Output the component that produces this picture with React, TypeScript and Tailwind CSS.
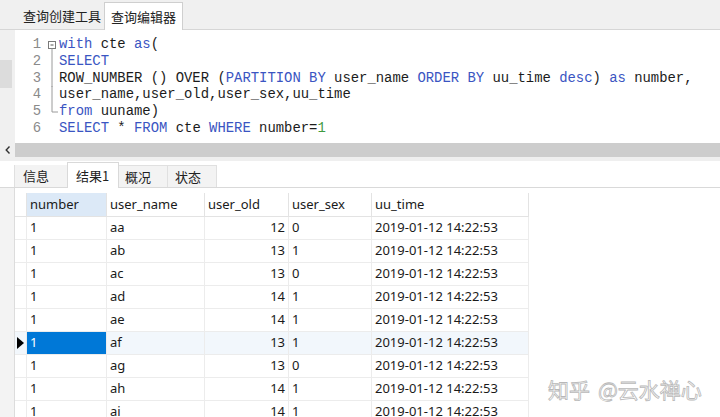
import React from 'react';

type Seg = [string, 'k' | 'p' | 'n'];

const codeLines: Seg[][] = [
  [['with', 'k'], [' cte ', 'p'], ['as', 'k'], ['(', 'p']],
  [['SELECT', 'k']],
  [
    ['ROW_NUMBER () OVER (', 'p'],
    ['PARTITION BY', 'k'],
    [' user_name ', 'p'],
    ['ORDER BY', 'k'],
    [' uu_time ', 'p'],
    ['desc', 'k'],
    [') ', 'p'],
    ['as', 'k'],
    [' number,', 'p'],
  ],
  [['user_name,user_old,user_sex,uu_time', 'p']],
  [['from', 'k'], [' uuname)', 'p']],
  [['SELECT', 'k'], [' * ', 'p'], ['FROM', 'k'], [' cte ', 'p'], ['WHERE', 'k'], [' number=', 'p'], ['1', 'n']],
];

const segColor = {
  k: 'text-[#3a55c2]',
  p: 'text-[#1c1c1c]',
  n: 'text-[#3f9b3f]',
};

const rows = [
  ['aa', '12', '0'],
  ['ab', '13', '1'],
  ['ac', '13', '0'],
  ['ad', '14', '1'],
  ['ae', '14', '1'],
  ['af', '13', '1'],
  ['ag', '13', '0'],
  ['ah', '14', '1'],
  ['ai', '14', '1'],
];

function FoldMark({ line }: { line: number }) {
  // fold guide drawn in the gutter next to the code
  return (
    <svg width="12" height="17" className="shrink-0">
      {line === 0 && (
        <>
          <rect x="1.5" y="5.5" width="7" height="7" fill="white" stroke="#7a7a7a" />
          <line x1="3.5" y1="9" x2="6.5" y2="9" stroke="#555" />
          <line x1="5" y1="12.5" x2="5" y2="17" stroke="#9a9a9a" />
        </>
      )}
      {line > 0 && line < 4 && <line x1="5" y1="0" x2="5" y2="17" stroke="#9a9a9a" />}
      {line === 4 && (
        <>
          <line x1="5" y1="0" x2="5" y2="9" stroke="#9a9a9a" />
          <line x1="5" y1="9" x2="11" y2="9" stroke="#9a9a9a" />
        </>
      )}
    </svg>
  );
}

export default function App() {
  return (
    <div className="w-[720px] h-[417px] overflow-hidden bg-white flex flex-col relative font-['Noto_Sans','Noto_Sans_CJK_SC',sans-serif] text-[13px] text-[#1a1a1a]">
      {/* top tabs */}
      <div className="h-[30px] shrink-0 flex items-end bg-[#f0f0f0] pl-[15px] border-b border-[#d6d6d6] font-['Noto_Sans_CJK_SC',sans-serif] text-[13px] text-[#222] whitespace-nowrap">
        <div className="h-[27px] pl-[8px] pr-[3px] flex items-center">查询创建工具</div>
        <div className="h-[28px] -mb-px px-[6px] flex items-center bg-white border border-b-0 border-[#cfcfcf]">
          查询编辑器
        </div>
      </div>

      {/* editor */}
      <div className="h-[113px] shrink-0 flex">
        <div className="w-[15px] shrink-0 bg-[#f0f0f0] pt-[30px]">
          <div className="h-[28px] w-[12px] bg-[#dcdcdc]" />
        </div>
        <div className="flex-1 bg-white pt-[6px] font-['Liberation_Mono',monospace] text-[13.9px] leading-[16.8px]">
          {codeLines.map((segs, i) => (
            <div key={i} className="flex items-center h-[16.8px]">
              <span className="w-[26px] text-right text-[#8a8a8a] shrink-0">{i + 1}</span>
              <span className="w-[6px] shrink-0" />
              <FoldMark line={i} />
              <span className="whitespace-pre">
                {segs.map(([t, c], j) => (
                  <span key={j} className={segColor[c]}>
                    {t}
                  </span>
                ))}
              </span>
            </div>
          ))}
        </div>
      </div>

      {/* horizontal scrollbar */}
      <div className="h-[14px] shrink-0 flex">
        <div className="w-[15px] bg-[#f0f0f0] flex items-center justify-center">
          <svg width="6" height="8" viewBox="0 0 6 8">
            <path d="M4.5 0.5 L1.2 4 L4.5 7.5" fill="none" stroke="#333" strokeWidth="1.4" />
          </svg>
        </div>
        <div className="flex-1 bg-[#cdcdcd]" />
      </div>
      <div className="h-[4px] shrink-0 bg-[#efefef]" />

      {/* result tabs */}
      <div className="h-[27px] shrink-0 flex items-end bg-white border-b border-[#d9d9d9] pl-[14px] font-['Noto_Sans_CJK_SC',sans-serif] text-[13px] text-[#222] whitespace-nowrap">
        <div className="h-[22px] w-[53px] pl-[8px] flex items-center bg-[#f3f3f3] border-l border-[#e0e0e0]">信息</div>
        <div className="h-[26px] -mb-px w-[52px] pl-[8px] flex items-center bg-white border border-b-0 border-[#d9d9d9]">结果1</div>
        <div className="h-[22px] w-[49px] pl-[6px] flex items-center bg-[#f3f3f3] border-r border-t border-[#e0e0e0]">概况</div>
        <div className="h-[22px] w-[49px] pl-[7px] flex items-center bg-[#f3f3f3] border-r border-t border-[#e0e0e0]">状态</div>
      </div>

      {/* result grid */}
      <div className="flex-1 flex">
        <div className="w-[15px] shrink-0 bg-[#f3f3f3] border-r border-[#dcdcdc]" />
        <div className="pt-[5px]">
          <div className="grid grid-cols-[12px_80px_98px_84px_83px_157px]">
            <div className="h-[24px] border-r border-b border-[#e3e3e3]" />
            <div className="h-[24px] px-[3px] flex items-center bg-[#dce9f7] border-r border-b border-[#e3e3e3]">number</div>
            <div className="h-[24px] px-[3px] flex items-center border-r border-b border-[#e3e3e3]">user_name</div>
            <div className="h-[24px] px-[3px] flex items-center border-r border-b border-[#e3e3e3]">user_old</div>
            <div className="h-[24px] px-[3px] flex items-center border-r border-b border-[#e3e3e3]">user_sex</div>
            <div className="h-[24px] px-[3px] flex items-center border-r border-b border-[#e3e3e3]">uu_time</div>
            {rows.map(([name, old, sex]) => {
              const sel = name === 'af';
              const bg = sel ? 'bg-[#f2f7fc]' : 'bg-white';
              return (
                <React.Fragment key={name}>
                  <div className={`h-[23px] flex items-center justify-center border-r border-b border-[#ececec] ${bg}`}>
                    {sel && (
                      <svg width="7" height="12" viewBox="0 0 7 12">
                        <path d="M0 0 L7 6 L0 12 Z" fill="#000" />
                      </svg>
                    )}
                  </div>
                  <div
                    className={`h-[23px] px-[3px] flex items-center border-r border-b border-[#ececec] ${
                      sel ? 'bg-[#0078d7] text-white' : 'bg-white'
                    }`}
                  >
                    1
                  </div>
                  <div className={`h-[23px] px-[3px] flex items-center border-r border-b border-[#ececec] ${bg}`}>{name}</div>
                  <div className={`h-[23px] px-[3px] flex items-center justify-end border-r border-b border-[#ececec] ${bg}`}>{old}</div>
                  <div className={`h-[23px] px-[3px] flex items-center border-r border-b border-[#ececec] ${bg}`}>{sex}</div>
                  <div className={`h-[23px] px-[3px] flex items-center border-r border-b border-[#ececec] ${bg}`}>2019-01-12 14:22:53</div>
                </React.Fragment>
              );
            })}
          </div>
        </div>
      </div>

      {/* watermark */}
      <div className="absolute left-[548px] top-[374px] flex items-center gap-[8px] font-['Noto_Sans_CJK_SC',sans-serif] text-[21px] text-white [-webkit-text-stroke:0.8px_#b8b8b8] whitespace-nowrap">
        <span>知乎</span>
        <span>@云水禅心</span>
      </div>
    </div>
  );
}
